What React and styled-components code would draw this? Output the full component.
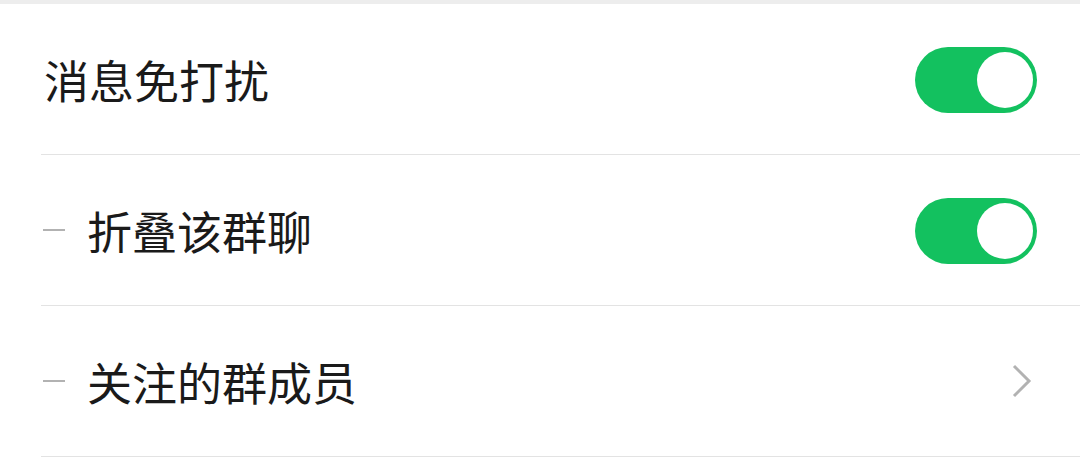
import React, { useState } from 'react';
import styled, { createGlobalStyle } from 'styled-components';

const GlobalStyle = createGlobalStyle`
  body {
    margin: 0;
    background: #ffffff;
    font-family: "Noto Sans CJK SC", "Noto Sans", sans-serif;
  }
`;

const App = () => {
  const [mute, setMute] = useState(true);
  const [fold, setFold] = useState(true);

  return (
    <Page>
      <GlobalStyle />
      <TopStrip />
      <List>
        <Row>
          <Label>消息免打扰</Label>
          <Switch on={mute} onClick={() => setMute(!mute)}>
            <Knob on={mute} />
          </Switch>
        </Row>
        <Row>
          <Dash />
          <Label indent>折叠该群聊</Label>
          <Switch on={fold} onClick={() => setFold(!fold)}>
            <Knob on={fold} />
          </Switch>
        </Row>
        <Row>
          <Dash />
          <Label indent>关注的群成员</Label>
          <Chevron viewBox="0 0 20 34" width="20" height="34">
            <path d="M2 2 L17 17 L2 32" fill="none" stroke="#b2b2b2" strokeWidth="3" />
          </Chevron>
        </Row>
      </List>
    </Page>
  );
};

const Page = styled.div`
  width: 1080px;
  height: 468px;
  background: #ffffff;
  overflow: hidden;
`;

const TopStrip = styled.div`
  height: 4px;
  background: #ededed;
`;

const List = styled.div`
  display: flex;
  flex-direction: column;
  padding-left: 41px;
`;

const Row = styled.div`
  display: flex;
  align-items: center;
  height: 150px;
  padding-right: 43px;
  border-bottom: 1px solid #e3e3e3;
`;

const Dash = styled.span`
  display: block;
  width: 22px;
  height: 2px;
  margin-left: 2px;
  background: #b2b2b2;
`;

const Label = styled.span`
  flex: 1;
  padding-left: ${(props) => (props.indent ? '22px' : '3px')};
  font-size: 45px;
  font-weight: 400;
  line-height: 1;
  color: #1a1a1a;
`;

const Switch = styled.div`
  position: relative;
  width: 122px;
  height: 66px;
  margin-top: 2px;
  border-radius: 33px;
  background: ${(props) => (props.on ? '#13c15f' : '#e5e5e5')};
  cursor: pointer;
`;

const Knob = styled.div`
  position: absolute;
  top: 5px;
  left: ${(props) => (props.on ? '62px' : '5px')};
  width: 56px;
  height: 56px;
  border-radius: 50%;
  background: #ffffff;
`;

const Chevron = styled.svg`
  display: block;
  margin-right: 5px;
`;

export default App;
